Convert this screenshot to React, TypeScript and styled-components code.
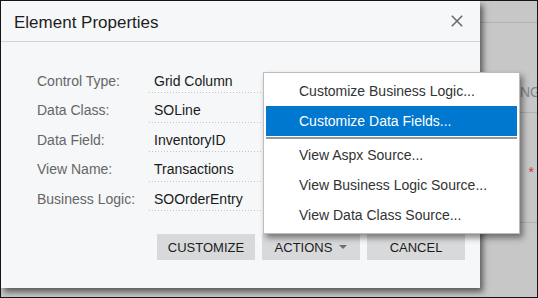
import React from "react";
import styled, { createGlobalStyle } from "styled-components";

const Global = createGlobalStyle`
  html, body { margin: 0; padding: 0; background: #c7c7c7; }
  * { box-sizing: border-box; }
  body { font-family: "Liberation Sans", Arial, sans-serif; }
`;

const Page = styled.div`
  position: relative;
  width: 538px;
  height: 298px;
  border: 1px solid #151515;
  background: #c7c7c7;
  overflow: hidden;
  font-family: "Liberation Sans", Arial, sans-serif;
`;

const BgBar = styled.div`
  height: 22px;
  border-bottom: 1px solid #b1b1b1;
`;

const BgSection = styled.div<{ $h: number; $pt?: number; $pb?: number; $align: string }>`
  height: ${(p) => p.$h}px;
  border-bottom: 1px solid #b1b1b1;
  display: flex;
  justify-content: flex-end;
  align-items: ${(p) => p.$align};
  padding-top: ${(p) => p.$pt ?? 0}px;
  padding-bottom: ${(p) => p.$pb ?? 0}px;
`;

const BgText = styled.span`
  font-size: 14px;
  line-height: 16px;
  color: #858585;
  margin-right: -4px;
  white-space: nowrap;
`;

const BgAsterisk = styled.span`
  font-size: 14px;
  line-height: 16px;
  color: #bf3b3b;
  margin-right: 3px;
`;

const Dialog = styled.div`
  position: absolute;
  left: 0;
  top: 0;
  width: 479px;
  height: 287px;
  background: #f5f7f9;
  box-shadow: 3px 4px 6px rgba(0, 0, 0, 0.55);
  display: flex;
  flex-direction: column;
`;

const Header = styled.div`
  height: 41px;
  border-bottom: 1px solid #d3d4d6;
  padding: 4px 17px 0 13px;
  display: flex;
  align-items: center;
  justify-content: space-between;
`;

const Title = styled.div`
  font-size: 17px;
  line-height: 20px;
  color: #1e1e1e;
`;

const CloseButton = styled.button`
  border: 0;
  background: transparent;
  padding: 0;
  width: 12px;
  height: 12px;
  margin-top: -4px;
  display: flex;
  cursor: pointer;
`;

const Body = styled.div`
  padding: 21.5px 40px 0 35px;
  display: flex;
  flex-direction: column;
`;

const Row = styled.div`
  display: grid;
  grid-template-columns: 113px 1fr;
  height: 29.5px;
  align-items: end;
`;

const Label = styled.div`
  font-size: 14px;
  line-height: 16px;
  color: #666666;
  padding-bottom: 4.5px;
  padding-left: 1px;
`;

const Value = styled.div`
  font-size: 14px;
  line-height: 16px;
  color: #1a1a1a;
  padding: 0 0 4.5px 5px;
  height: 100%;
  display: flex;
  align-items: flex-end;
  background-image: linear-gradient(to right, #c2c4c6 1px, transparent 1px);
  background-size: 3px 1px;
  background-repeat: repeat-x;
  background-position: left bottom;
`;

const Footer = styled.div`
  margin-top: 23px;
  padding-right: 15px;
  display: flex;
  justify-content: flex-end;
  gap: 7px;
`;

const Button = styled.button`
  width: 98px;
  height: 26px;
  border: 0;
  background: #d8d9db;
  color: #1c1c1c;
  font-family: "Liberation Sans", Arial, sans-serif;
  font-size: 13px;
  text-transform: uppercase;
  display: flex;
  align-items: center;
  justify-content: center;
  gap: 7px;
  padding: 0;
  cursor: pointer;
`;

const ActionsWrap = styled.div`
  position: relative;
`;

const Menu = styled.div`
  position: absolute;
  left: 1px;
  bottom: 100%;
  width: 257px;
  background: #ffffff;
  border: 1px solid #bcbcbc;
  box-shadow: 3px 4px 6px rgba(0, 0, 0, 0.45);
  padding: 3px 2px;
  display: flex;
  flex-direction: column;
  z-index: 2;
`;

const MenuItem = styled.div<{ $active?: boolean }>`
  height: 30px;
  padding-left: 33px;
  display: flex;
  align-items: center;
  font-size: 14px;
  color: ${(p) => (p.$active ? "#ffffff" : "#333333")};
  background: ${(p) => (p.$active ? "#0078cf" : "transparent")};
  white-space: nowrap;
`;

const Separator = styled.div`
  height: 2px;
  margin: 1px 0;
  background: #979797;
`;

const fields: [string, string][] = [
  ["Control Type:", "Grid Column"],
  ["Data Class:", "SOLine"],
  ["Data Field:", "InventoryID"],
  ["View Name:", "Transactions"],
  ["Business Logic:", "SOOrderEntry"],
];

export default function App() {
  return (
    <>
      <Global />
      <Page>
        <BgBar />
        <BgSection $h={90} $pb={12} $align="flex-end">
          <BgText>ING</BgText>
        </BgSection>
        <BgSection $h={110} $pt={51} $align="flex-start">
          <BgAsterisk>*</BgAsterisk>
        </BgSection>

        <Dialog>
          <Header>
            <Title>Element Properties</Title>
            <CloseButton aria-label="Close">
              <svg width="12" height="12" viewBox="0 0 12 12">
                <path d="M0.8 0.8 L11.2 11.2 M11.2 0.8 L0.8 11.2" stroke="#6b6b6b" strokeWidth="1.6" fill="none" />
              </svg>
            </CloseButton>
          </Header>
          <Body>
            {fields.map(([l, v]) => (
              <Row key={l}>
                <Label>{l}</Label>
                <Value>{v}</Value>
              </Row>
            ))}
          </Body>
          <Footer>
            <Button>Customize</Button>
            <ActionsWrap>
              <Button>
                Actions
                <svg width="8" height="4" viewBox="0 0 8 4">
                  <path d="M0 0 L8 0 L4 4 Z" fill="#6e6e6e" />
                </svg>
              </Button>
              <Menu>
                <MenuItem>Customize Business Logic...</MenuItem>
                <MenuItem $active>Customize Data Fields...</MenuItem>
                <Separator />
                <MenuItem>View Aspx Source...</MenuItem>
                <MenuItem>View Business Logic Source...</MenuItem>
                <MenuItem>View Data Class Source...</MenuItem>
              </Menu>
            </ActionsWrap>
            <Button>Cancel</Button>
          </Footer>
        </Dialog>
      </Page>
    </>
  );
}
